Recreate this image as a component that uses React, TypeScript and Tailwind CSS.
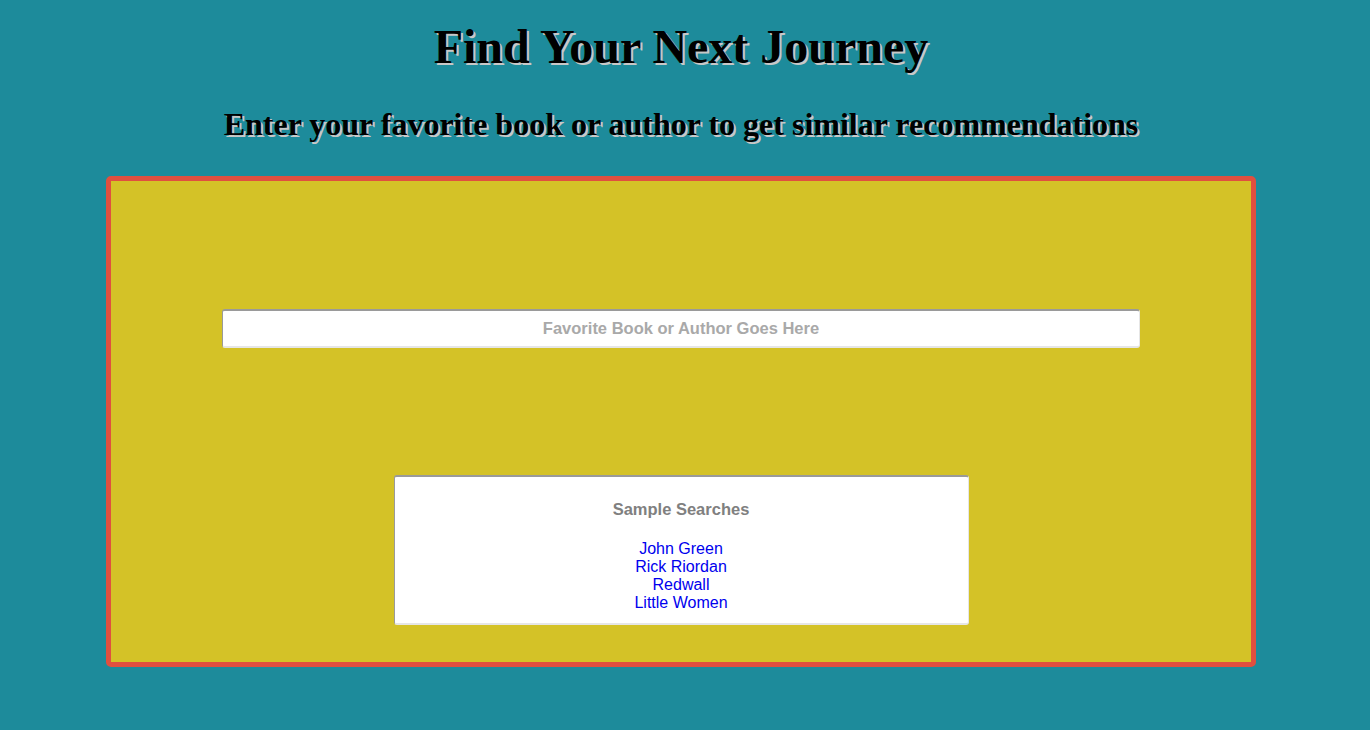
export default function App() {
    const samples = ["John Green", "Rick Riordan", "Redwall", "Little Women"];

    return (
        <div className="min-h-[730px] w-full bg-[#1d8b9b]">
            <div className="w-[1362px] flex flex-col items-center pt-[21px]">
                <h1 className="font-['Liberation_Serif',serif] font-bold text-[48px] leading-[52px] text-black [text-shadow:2px_2px_0_#c8c8c8]">
                    Find Your Next Journey
                </h1>
                <h2 className="mt-[34px] font-['Liberation_Serif',serif] font-bold text-[32px] leading-[34px] text-black [text-shadow:2px_2px_0_#c8c8c8]">
                    Enter your favorite book or author to get similar recommendations
                </h2>

                <div className="mt-[35px] w-[1150px] h-[491px] border-[5px] border-[#e04f3f] rounded-[5px] bg-[#d4c227] flex flex-col items-center">
                    <input
                        type="text"
                        placeholder="Favorite Book or Author Goes Here"
                        className="mt-[128px] w-[918px] h-[39px] bg-white rounded-[3px] border-t-2 border-l border-t-[#9a9a9a] border-l-[#9a9a9a] border-b-2 border-r border-b-[#e6e6e6] border-r-[#e6e6e6] text-center font-['Liberation_Sans',Arial,sans-serif] font-bold text-[16.5px] placeholder:text-[#a9a9a9] outline-none"
                    />

                    <div className="mt-[127px] w-[575px] h-[150px] bg-white rounded-[3px] border-t-2 border-l border-t-[#9a9a9a] border-l-[#9a9a9a] border-b-2 border-r border-b-[#e6e6e6] border-r-[#e6e6e6] flex flex-col items-center font-['Liberation_Sans',Arial,sans-serif]">
                        <p className="mt-[22px] text-[16.5px] leading-[20px] font-bold text-[#808080]">
                            Sample Searches
                        </p>
                        <div className="mt-[21px] flex flex-col items-center">
                            {samples.map((s) => (
                                <a
                                    key={s}
                                    href="#"
                                    className="text-[16px] leading-[18px] text-[#0000ee]"
                                >
                                    {s}
                                </a>
                            ))}
                        </div>
                    </div>
                </div>
            </div>
        </div>
    );
}
